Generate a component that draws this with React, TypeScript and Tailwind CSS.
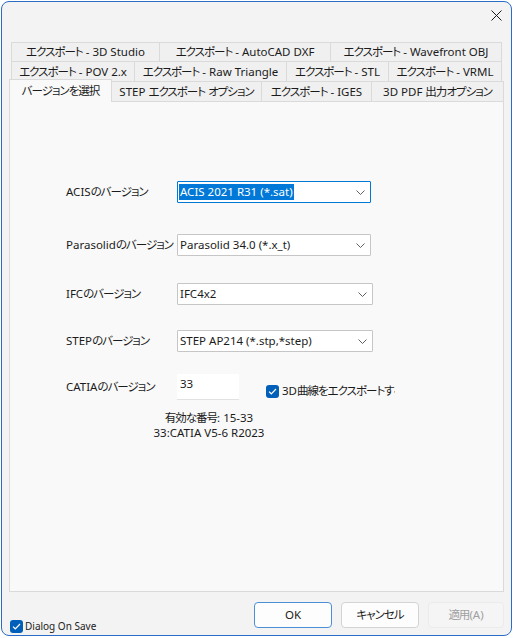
import React from "react";

// narrow the full-width kana/kanji runs a bit so they sit like Meiryo UI
const J = ({ t }: { t: string }) => (
  <span>
    {t.split(/([\u3000-\u9fff\uff00-\uffef]+)/).map((s, i) =>
      i % 2 === 1 ? (
        <span key={i} className="tracking-[-1px]">
          {s}
        </span>
      ) : (
        s
      )
    )}
  </span>
);

const Tab = ({ label, className }: { label: string; className: string }) => (
  <div
    className={
      "flex items-center justify-center border border-b-0 border-[#dadada] bg-[#f0f0f0] text-[11.5px] text-[#1b1b1b] whitespace-nowrap " +
      className
    }
  >
    <J t={label} />
  </div>
);

const Chevron = () => (
  <svg width="9" height="5" viewBox="0 0 9 5" className="shrink-0">
    <path d="M0.5 0.5 L4.5 4.5 L8.5 0.5" stroke="#606060" fill="none" strokeWidth="1" />
  </svg>
);

const Select = ({
  value,
  width,
  focused,
}: {
  value: string;
  width: string;
  focused?: boolean;
}) => (
  <div
    className={
      "h-[22px] flex items-center justify-between bg-white border pl-[1px] pr-[5px] rounded-[1px] " +
      width +
      (focused ? " border-[#0078d4]" : " border-[#c6c6c6]")
    }
  >
    <span
      className={
        "text-[11.5px] leading-[16px] px-px " +
        (focused ? "bg-[#0078d7] text-white" : "text-[#1b1b1b]")
      }
    >
      {value}
    </span>
    <Chevron />
  </div>
);

const Check = () => (
  <div className="w-[13px] h-[13px] rounded-[3px] bg-[#005fb8] flex items-center justify-center shrink-0">
    <svg width="9" height="7" viewBox="0 0 9 7">
      <path d="M1 3.6 L3.3 5.8 L8 1" stroke="white" strokeWidth="1.2" fill="none" />
    </svg>
  </div>
);

const Row = ({ label, children, className }: { label: string; children: React.ReactNode; className: string }) => (
  <div className={"flex items-center " + className}>
    <div className="w-[111px] text-[11.5px] text-[#1b1b1b] whitespace-nowrap">
      <J t={label} />
    </div>
    {children}
  </div>
);

export default function App() {
  return (
    <div className="w-[513px] h-[638px] bg-white font-['Noto_Sans','Noto_Sans_CJK_JP',sans-serif] [font-feature-settings:'palt']">
      <div className="ml-px mt-px w-[511px] h-[635px] border border-[#2a6cc8] rounded-[8px] bg-[#f3f3f3] flex flex-col overflow-hidden">
        {/* title bar */}
        <div className="h-[40px] flex justify-end pr-[9px] pt-[8px]">
          <svg width="11" height="11" viewBox="0 0 11 11">
            <path d="M0.5 0.5 L10.5 10.5 M10.5 0.5 L0.5 10.5" stroke="#1b1b1b" strokeWidth="1" />
          </svg>
        </div>

        {/* tabs */}
        <div className="ml-[7px] flex flex-col">
          <div className="flex h-[19px] ml-[2px]">
            <Tab label="エクスポート - 3D Studio" className="w-[149px]" />
            <Tab label="エクスポート - AutoCAD DXF" className="w-[172px] -ml-px" />
            <Tab label="エクスポート - Wavefront OBJ" className="w-[172px] -ml-px" />
          </div>
          <div className="flex h-[20px] ml-[2px]">
            <Tab label="エクスポート - POV 2.x" className="w-[124px]" />
            <Tab label="エクスポート - Raw Triangle" className="w-[153px] -ml-px" />
            <Tab label="エクスポート - STL" className="w-[103px] -ml-px" />
            <Tab label="エクスポート - VRML" className="w-[114px] -ml-px" />
          </div>
          <div className="flex h-[20px]">
            <div className="relative z-10 -mt-[2px] h-[23px] w-[103px] flex items-center justify-center border border-b-0 border-[#dadada] bg-[#f9f9f9] text-[11.5px] text-[#1b1b1b] whitespace-nowrap">
              <J t="バージョンを選択" />
            </div>
            <Tab label="STEP エクスポート オプション" className="w-[151px] -ml-px" />
            <Tab label="エクスポート - IGES" className="w-[111px] -ml-px" />
            <Tab label="3D PDF 出力オプション" className="w-[133px] -ml-px" />
          </div>
        </div>

        {/* panel */}
        <div className="ml-[7px] w-[495px] h-[491px] border border-[#dadada] bg-[#f9f9f9] pt-[79px] pl-[56px] flex flex-col">
          <Row label="ACISのバージョン" className="">
            <Select value="ACIS 2021 R31 (*.sat)" width="w-[194px]" focused />
          </Row>
          <Row label="Parasolidのバージョン" className="mt-[31px]">
            <Select value="Parasolid 34.0 (*.x_t)" width="w-[194px]" />
          </Row>
          <Row label="IFCのバージョン" className="mt-[27px]">
            <Select value="IFC4x2" width="w-[196px]" />
          </Row>
          <Row label="STEPのバージョン" className="mt-[25px]">
            <Select value="STEP AP214 (*.stp,*step)" width="w-[196px]" />
          </Row>
          <div className="mt-[22px] flex items-start">
            <div className="w-[111px] mt-[5px] text-[11.5px] leading-[16px] text-[#1b1b1b] whitespace-nowrap">
              <J t="CATIAのバージョン" />
            </div>
            <div className="w-[62px] h-[26px] bg-white border-b border-[#e2e2e2] pl-[3px] pt-[2px] text-[11.5px] leading-[16px] text-[#1b1b1b]">
              33
            </div>
            <div className="ml-[27px] mt-[9px] w-[129px] flex items-center gap-[3px] overflow-hidden">
              <Check />
              <span className="text-[11.5px] leading-[16px] text-[#1b1b1b] whitespace-nowrap">
                <J t="3D曲線をエクスポートする" />
              </span>
            </div>
          </div>
          <div className="ml-[73px] mt-[10px] w-[140px] text-center text-[11.5px] leading-[15px] text-[#1b1b1b]">
            <div>
              <J t="有効な番号: 15-33" />
            </div>
            <div>33:CATIA V5-6 R2023</div>
          </div>
        </div>

        {/* footer */}
        <div className="flex items-start pl-[8px] pr-[7px]">
          <div className="mt-[27px] flex items-center gap-[2px]">
            <Check />
            <span className="text-[10px] leading-[14px] text-[#1b1b1b]">Dialog On Save</span>
          </div>
          <div className="ml-auto mt-[10px] flex gap-[9px]">
            <div className="w-[78px] h-[26px] flex items-center justify-center rounded-[4px] bg-[#fdfdfd] border border-[#4c8fd6] text-[11.5px] text-[#1b1b1b]">
              OK
            </div>
            <div className="w-[78px] h-[26px] flex items-center justify-center rounded-[4px] bg-[#fdfdfd] border border-[#d3d3d3] text-[11.5px] text-[#1b1b1b]">
              <J t="キャンセル" />
            </div>
            <div className="w-[76px] h-[26px] flex items-center justify-center rounded-[4px] bg-[#f5f5f5] border border-[#ebebeb] text-[11.5px] text-[#a0a0a0]">
              <J t="適用(A)" />
            </div>
          </div>
        </div>
      </div>
    </div>
  );
}
